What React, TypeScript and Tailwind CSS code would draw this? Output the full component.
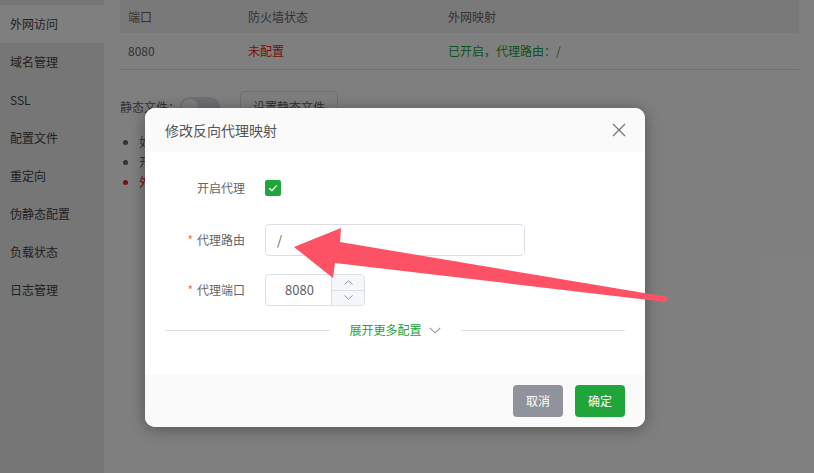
import React from 'react';

const menu = ['外网访问', '域名管理', 'SSL', '配置文件', '重定向', '伪静态配置', '负载状态', '日志管理'];

const Label: React.FC<{ text: string; required?: boolean }> = ({ text, required }) => (
    <div className="w-[100px] shrink-0 text-right text-[12px] text-[#666]">
        {required && <span className="mr-[4px] text-[#f56c6c]">*</span>}
        {text}
    </div>
);

const App: React.FC = () => {
    return (
        <div className="relative h-[473px] w-[814px] overflow-hidden bg-white font-['Noto_Sans_CJK_SC',sans-serif] text-[12px] text-[#666]">
            {/* --- PAGE UNDER THE MASK --- */}
            <div className="flex h-full">
                <div className="w-[104px] shrink-0 bg-[#ececec] pt-[5px]">
                    {menu.map((m, i) => (
                        <div
                            key={m}
                            className={`flex h-[38px] items-center pl-[10px] text-[12px] text-[#444] ${i === 0 ? 'bg-white' : ''}`}
                        >
                            {m}
                        </div>
                    ))}
                </div>

                <div className="flex-1 pl-[16px] pr-[15px]">
                    <div className="w-full">
                        <div className="flex h-[33px] items-center bg-[#f2f2f2] text-[#666]">
                            <div className="w-[120px] pl-[8px]">端口</div>
                            <div className="w-[200px] pl-[8px]">防火墙状态</div>
                            <div className="flex-1 pl-[8px]">外网映射</div>
                        </div>
                        <div className="flex h-[37px] items-center border-b border-[#dedede]">
                            <div className="w-[120px] pl-[8px]">8080</div>
                            <div className="w-[200px] pl-[8px] text-[#ef2020]">未配置</div>
                            <div className="flex-1 pl-[8px] text-[#20a53a]">已开启，代理路由：/</div>
                        </div>
                    </div>

                    <div className="mt-[21px] flex items-center">
                        <span>静态文件：</span>
                        <div className="flex h-[20px] w-[40px] items-center rounded-full bg-[#dcdfe6] pl-[2px]">
                            <div className="h-[16px] w-[16px] rounded-full bg-white" />
                        </div>
                        <div className="ml-[20px] flex h-[31px] items-center rounded-[4px] border border-[#dcdfe6] px-[12px] text-[#606266]">
                            设置静态文件
                        </div>
                    </div>

                    <ul className="mt-[10px] ml-[5px] list-disc pl-[14px] leading-[20px]">
                        <li>如需</li>
                        <li>开启后</li>
                        <li className="text-[#ef2020]">外网</li>
                    </ul>
                </div>
            </div>

            {/* --- MASK --- */}
            <div className="absolute inset-0 bg-black/50" />

            {/* --- DIALOG --- */}
            <div className="absolute left-[145px] top-[108px] w-[500px] overflow-hidden rounded-[10px] bg-white shadow-[0_2px_16px_rgba(0,0,0,0.35)]">
                <div className="flex h-[44px] items-center justify-between bg-[#fafafa] px-[20px]">
                    <span className="text-[14px] text-[#555]">修改反向代理映射</span>
                    <svg width="14" height="14" viewBox="0 0 14 14" className="mr-[-1px]">
                        <path d="M1 1L13 13M13 1L1 13" stroke="#777" strokeWidth="1.3" fill="none" />
                    </svg>
                </div>

                <div className="h-[223px] px-[20px] pt-[20px]">
                    <div className="ml-[-20px] flex h-[32px] items-center gap-[20px]">
                        <Label text="开启代理" />
                        <div className="flex h-[16px] w-[16px] items-center justify-center rounded-[2px] bg-[#20a53a]">
                            <svg width="12" height="12" viewBox="0 0 12 12">
                                <path d="M2.2 6.2L4.9 8.7L9.8 3.4" stroke="white" strokeWidth="1.3" fill="none" />
                            </svg>
                        </div>
                    </div>

                    <div className="ml-[-20px] mt-[20px] flex h-[32px] items-center gap-[20px]">
                        <Label text="代理路由" required />
                        <div className="flex h-[32px] w-[260px] items-center rounded-[4px] border border-[#dcdfe6] px-[11px] text-[13px] text-[#606266]">
                            /
                        </div>
                    </div>

                    <div className="ml-[-20px] mt-[18px] flex h-[32px] items-center gap-[20px]">
                        <Label text="代理端口" required />
                        <div className="flex h-[32px] w-[100px] overflow-hidden rounded-[4px] border border-[#dcdfe6]">
                            <div className="flex flex-1 items-center justify-center pl-[2px] text-[13px] text-[#606266]">8080</div>
                            <div className="flex w-[33px] flex-col border-l border-[#dcdfe6] bg-[#f5f7fa]">
                                <div className="flex flex-1 items-center justify-center border-b border-[#dcdfe6]">
                                    <svg width="9" height="5" viewBox="0 0 9 5">
                                        <path d="M0.5 4.5L4.5 0.8L8.5 4.5" stroke="#909399" strokeWidth="1" fill="none" />
                                    </svg>
                                </div>
                                <div className="flex flex-1 items-center justify-center">
                                    <svg width="9" height="5" viewBox="0 0 9 5">
                                        <path d="M0.5 0.5L4.5 4.2L8.5 0.5" stroke="#909399" strokeWidth="1" fill="none" />
                                    </svg>
                                </div>
                            </div>
                        </div>
                    </div>

                    <div className="mt-[16px] flex h-[16px] items-center">
                        <div className="h-px flex-1 bg-[#dcdfe6]" />
                        <div className="flex items-center gap-[7px] px-[20px] text-[12px] text-[#20a53a]">
                            展开更多配置
                            <svg width="12" height="7" viewBox="0 0 12 7">
                                <path d="M0.8 0.8L6 5.8L11.2 0.8" stroke="#909399" strokeWidth="1.1" fill="none" />
                            </svg>
                        </div>
                        <div className="h-px flex-1 bg-[#dcdfe6]" />
                    </div>
                </div>

                <div className="flex h-[52px] items-start justify-end gap-[12px] bg-[#fafafa] pr-[20px] pt-[10px]">
                    <div className="flex h-[32px] w-[50px] items-center justify-center rounded-[4px] bg-[#90939b] text-[12px] text-white">
                        取消
                    </div>
                    <div className="flex h-[32px] w-[50px] items-center justify-center rounded-[4px] bg-[#20a53a] text-[12px] text-white">
                        确定
                    </div>
                </div>
            </div>

            {/* --- ANNOTATION ARROW --- */}
            <svg className="pointer-events-none absolute inset-0" width="814" height="473" viewBox="0 0 814 473">
                <polygon points="294,247 341,228 340,242 668,297 666,302 335,263 333,278" fill="#fd5266" />
            </svg>
        </div>
    );
};

export default App;
